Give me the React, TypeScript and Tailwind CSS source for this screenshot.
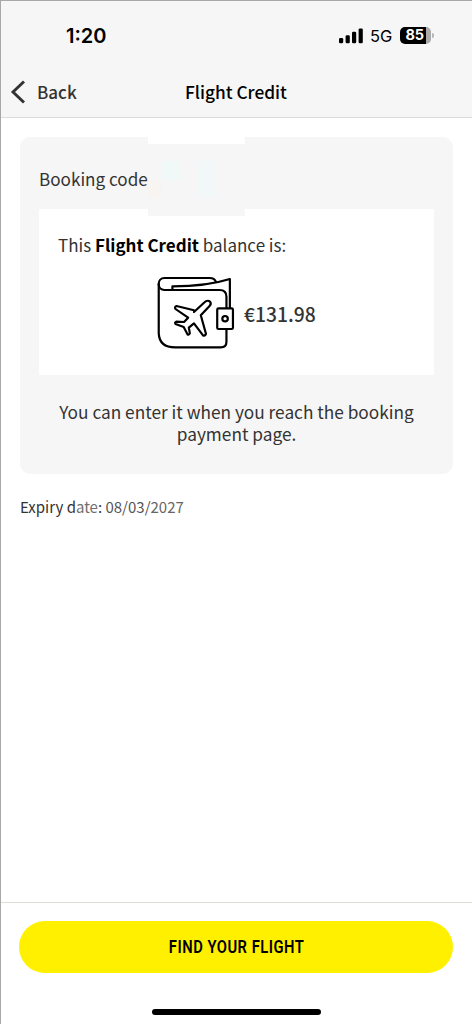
function StatusBar() {
    return (
        <div className="flex h-[65px] items-center justify-between pl-[65px] pr-[38px] pt-[4px] font-['Inter',sans-serif] text-black">
            <span className="text-[20px] font-semibold leading-6">1:20</span>
            <div className="flex items-center">
                <svg width="24" height="16" viewBox="0 0 24 16" fill="currentColor">
                    <rect x="0" y="10" width="4.2" height="5.3" rx="1.3" />
                    <rect x="6.6" y="7.2" width="4.2" height="8.1" rx="1.3" />
                    <rect x="13" y="3.8" width="4.2" height="11.5" rx="1.3" />
                    <rect x="19.6" y="0.5" width="4.2" height="14.8" rx="1.3" />
                </svg>
                <span className="ml-[7px] w-[23px] text-[16.5px] leading-5">5G</span>
                <div className="ml-[7px] flex h-[17px] w-[31px] items-center overflow-hidden rounded-[5px] bg-gradient-to-r from-black from-[84%] to-[#ababab] to-[84%] pl-[5.5px] text-[14.5px] font-bold leading-none tracking-[-0.3px] text-white">
                    85
                </div>
                <div className="ml-px h-[5px] w-[2px] rounded-r-full bg-[#b5b5b5]" />
            </div>
        </div>
    );
}

function NavBar() {
    return (
        <div className="grid h-[51px] grid-cols-[1fr_auto_1fr] items-center pl-[9px] pr-[10px] text-[17px] font-medium leading-6">
            <button className="flex items-center text-[#333]">
                <svg width="16" height="24" viewBox="0 0 16 24" fill="none" stroke="currentColor" strokeWidth="2.9">
                    <path d="M14 1.5 3 12l11 10.5" />
                </svg>
                <span className="ml-[11px]">Back</span>
            </button>
            <h1 className="text-[17.3px] text-black">Flight Credit</h1>
        </div>
    );
}

function WalletIcon() {
    return (
        <svg width="79" height="76" viewBox="36 30 231 228" preserveAspectRatio="none" fill="none" stroke="#000" strokeWidth="6.4" strokeLinecap="round" strokeLinejoin="round">
            <path d="M44 57v148q2 42 48 42h133q17 0 17-17v-36" />
            <path d="M211 50q-4-11-18-11H61c-23 0-23 36 0 36h161q20 0 20 20v33" />
            <path d="M84 74V64c62 0 119-6 168-22v86" />
            <rect x="215" y="130" width="46" height="62" rx="4" />
            <circle cx="238" cy="161" r="8" />
            <path d="m147 141 31-29c6-6 13-5 16-2 3 4 2 10-2 14l-25 27 15 55q-1 7-8 6l-27-37-15 13 3 17q-3 6-7 3l-11-22-24-9q-3-5 2-7l23 1 12-13-37-26q-4-6 3-9l51 13" />
        </svg>
    );
}

export default function App() {
    return (
        <main className="flex h-[1024px] w-[472px] flex-col border-l border-t border-[#a8a8a8] bg-white font-['Noto_Sans_CJK_SC',sans-serif] text-[#333]">
            <header className="h-[117px] border-b border-[#dcdcdc] bg-[#f6f6f6]">
                <StatusBar />
                <NavBar />
            </header>

            <section className="flex-1 pl-[19px] pr-[19px] pt-[19px]">
                <div className="relative h-[337px] rounded-[10px] bg-[#f6f6f6] px-[19px] pt-[30px]">
                    <p className="text-[17.1px] leading-6">Booking code</p>

                    <div className="mt-[18px] h-[166px] bg-white px-[19px] pt-[24px]">
                        <p className="text-[17px] leading-6">
                            This <strong className="font-bold text-black">Flight Credit</strong> balance is:
                        </p>
                        <div className="mt-[18px] flex items-center pl-[98px]">
                            <WalletIcon />
                            <span className="ml-[9px] pt-px text-[19.3px] font-medium leading-6">€131.98</span>
                        </div>
                    </div>

                    <p className="mt-[26px] text-center text-[17.25px] leading-[22px]">
                        You can enter it when you reach the booking payment page.
                    </p>

                    {/* Masked booking code */}
                    <div className="absolute left-[128px] top-0 h-[79px] w-[97px] border-t-[7px] border-white bg-[#f6f6f6]">
                        <div className="absolute left-[14px] top-[17px] h-[19px] w-[18px] bg-[#f0f9f8]" />
                        <div className="absolute left-[50px] top-[17px] h-[37px] w-[18px] bg-[#f2f7f7]" />
                        <div className="absolute left-0 top-[36px] h-[18px] w-[14px] bg-[#f8f4f2]" />
                    </div>
                </div>

                <p className="mt-[21px] text-[15px] leading-6">
                    Expiry d<span className="text-[#707070]">ate</span>: <span className="text-[#555]">08/03/</span><span className="text-[#666]">2027</span>
                </p>
            </section>

            <footer className="flex h-[122px] flex-col items-center border-t border-[#deded8] pl-[18px] pr-[19px] pt-[18px]">
                <button className="h-[52px] w-full rounded-full bg-[#fff000] font-['Roboto',sans-serif] text-[18px] font-semibold leading-6 text-black">
                    <span className="ml-[2px] inline-block scale-x-[0.82] whitespace-nowrap tracking-[0.6px]">FIND YOUR FLIGHT</span>
                </button>
                <div className="mt-[36px] h-[6px] w-[169px] rounded-full bg-black" />
            </footer>
        </main>
    );
}
